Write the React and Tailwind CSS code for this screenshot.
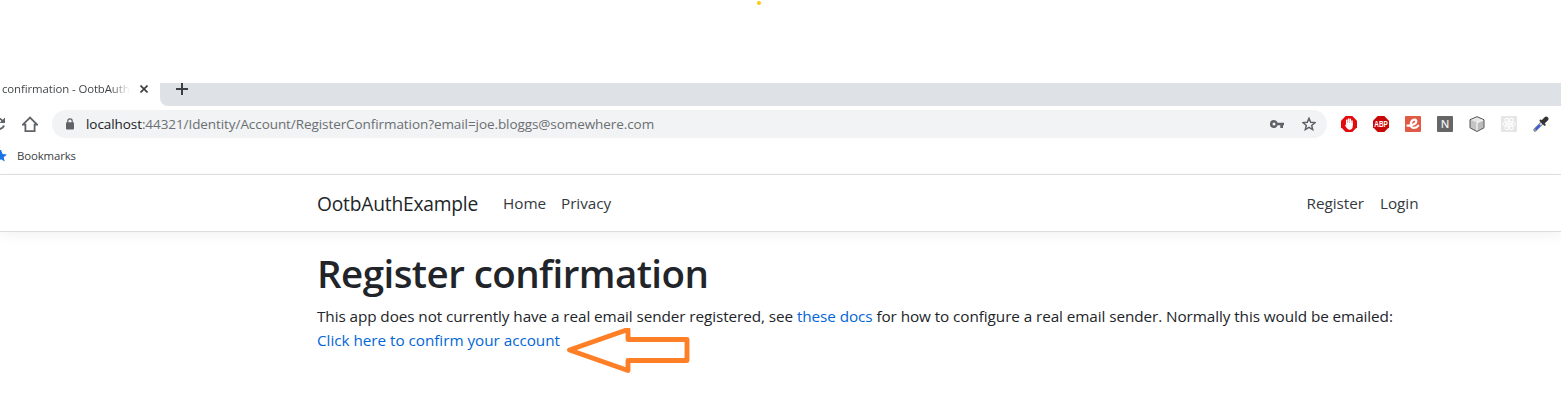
function Toolbar() {
  return (
    <div className="flex h-9 items-center">
      <svg className="h-4 w-2 shrink-0" viewBox="0 0 8 16" fill="none" stroke="#5f6368" strokeWidth="2">
        <path d="M-2 2.2A6 6 0 0 1 2.600 5.200M4 9.500A5.500 5.500 0 0 1 -1 13" />
        <path d="M5 1.500v5.500H-.5z" fill="#5f6368" stroke="none" />
      </svg>
      <svg className="ml-3.5 h-4 w-4 shrink-0" viewBox="0 0 16 16" fill="none" stroke="#5f6368" strokeWidth="1.8">
        <path d="M.9 8.600 8 1.500l7.100 7.100H12.600V15.100H3.400V8.600z" />
      </svg>
      <div className="ml-3.5 flex h-7 w-[1275px] shrink-0 items-center rounded-full bg-[#f1f3f4]">
        <svg className="ml-3.5 h-3 w-2 shrink-0" viewBox="0 0 8 12">
          <rect y="4.300" width="8" height="7.200" rx="1" fill="#5f6368" />
          <path d="M1.800 5V3a2.200 2.200 0 0 1 4.400 0v2" fill="none" stroke="#5f6368" strokeWidth="1.200" />
        </svg>
        <span className="ml-3 text-[13.5px] tracking-[-0.076px] whitespace-nowrap text-[#6b6f73]">
          <span className="text-[#202124]">localhost</span>:44321/Identity/Account/RegisterConfirmation?email=joe.bloggs@somewhere.com
        </span>
        <svg className="mr-[18px] ml-auto h-2 w-3.5 shrink-0" viewBox="0 0 14 8" fill="#5f6368">
          <path fillRule="evenodd" d="M4 0a4 4 0 0 1 3.700 2.700H14v2.600h-1V8h-2.700V5.300H7.700A4 4 0 1 1 4 0zm0 2.500a1.500 1.500 0 1 0 0 3 1.500 1.500 0 0 0 0-3z" />
        </svg>
        <svg className="mr-[11px] h-3.5 w-3.5 shrink-0" viewBox="0 0 14 14" fill="none" stroke="#5f6368" strokeWidth="1.500">
          <path d="m7 1.200 1.700 4 4.300.400-3.300 2.800 1 4.200L7 10.400l-3.700 2.200 1-4.200L1 5.600l4.300-.400z" />
        </svg>
      </div>
      <div className="ml-3.5 flex items-center gap-4">
        <svg className="size-4" viewBox="0 0 16 16">
          <path d="M4.700 0h6.600L16 4.700v6.600L11.300 16H4.700L0 11.300V4.700z" fill="#e40b0f" />
          <path d="M5.700 8V4.300M7.500 8V3M9.300 8V3.200M11 9V5" stroke="#fff" strokeWidth="1.500" strokeLinecap="round" />
          <path d="M5 7h6.700v3.500c0 2-1.200 3.200-3 3.200-2 0-3-1.400-4.700-4.400.2-.8 1-.6 1.500.1z" fill="#fff" />
        </svg>
        <svg className="size-4 overflow-visible" viewBox="0 0 16 16">
          <path d="M4.700 0h6.600L16 4.700v6.600L11.300 16H4.700L0 11.300V4.700z" fill="#c90707" />
          <text x="8" y="11" textAnchor="middle" textLength="13.400" lengthAdjust="spacingAndGlyphs" fontFamily="Liberation Sans, sans-serif" fontWeight="700" fontSize="8.300" fill="#fff">ABP</text>
        </svg>
        <svg className="size-4" viewBox="0 0 16 16">
          <rect width="16" height="16" rx="1" fill="#e05a45" />
          <path d="M2.400 9.600C6.500 9.800 11.300 8 11.300 5.200 11.300 2.400 5.800 3.200 5.800 8.500c0 4.500 4.700 4.200 7.400 1.200" fill="none" stroke="#fff" strokeWidth="2.200" strokeLinecap="round" />
        </svg>
        <div className="flex size-4 items-center justify-center rounded-[1px] bg-[#666] text-[11px] leading-4 font-semibold text-[#eee]">N</div>
        <svg className="size-4" viewBox="0 0 16 16" strokeLinejoin="round">
          <path d="m8 .7 7 3v8.100l-7 3.700-7-3.700V3.700z" fill="#c4c4c4" stroke="#555" />
          <path d="m8 1.500 6 2.500-6 2.500L2 4z" fill="#e6e6e6" />
          <path d="M8.500 7 14 4.500v6.800l-5.500 3z" fill="#bbb" />
          <path d="M8 14.500V6.700l6-2.500" fill="none" stroke="#fff" />
        </svg>
        <svg className="size-4" viewBox="0 0 16 16" fill="none" stroke="#fff">
          <rect width="16" height="16" rx="1" fill="#e6e6e6" stroke="none" />
          <ellipse cx="8" cy="8" rx="6.300" ry="2.500" />
          <ellipse cx="8" cy="8" rx="6.300" ry="2.500" transform="rotate(60 8 8)" />
          <ellipse cx="8" cy="8" rx="6.300" ry="2.500" transform="rotate(120 8 8)" />
          <circle cx="8" cy="8" r="1.200" fill="#fff" />
        </svg>
        <svg className="size-4" viewBox="0 0 16 16" strokeLinecap="round">
          <path d="m2 14 7-7" stroke="#777" strokeWidth="3.200" />
          <path d="m2.400 13.600 6.200-6.200" stroke="#d5dcf5" strokeWidth="1.800" />
          <path d="m3 13 3.500-3.500" stroke="#2f55e0" strokeWidth="1.900" />
          <path d="m7.500 4.500 4.200 4.200" stroke="#333" strokeWidth="2" />
          <path d="m10.500 5.500 2.700-2.700" stroke="#333" strokeWidth="4.500" />
        </svg>
      </div>
    </div>
  );
}

export default function App() {
  return (
    <div className="h-[412px] w-[1561px] overflow-hidden bg-white font-['Open_Sans','Noto_Sans',sans-serif] text-[#212529]">
      <div className="flex h-[83px] pl-[757px]">
        <div className="mt-px size-1 rounded-full bg-[#ffc90e]" />
      </div>
      <div className="flex h-[23px] bg-white">
        <div className="flex w-40 shrink-0 items-start pl-0.5">
          <span className="w-32 shrink-0 bg-linear-to-r from-[#3c4043] from-85% to-transparent bg-clip-text text-[11.4px] leading-3 tracking-[-0.1px] whitespace-nowrap text-transparent">confirmation - OotbAuth</span>
          <svg className="mt-0.5 ml-2.5 size-2" viewBox="0 0 8 8" stroke="#3c4043" strokeWidth="1.700"><path d="m.5.500 7 7m0-7-7 7" /></svg>
        </div>
        <div className="flex-1 rounded-bl-lg bg-[#dee1e6] pl-4">
          <svg className="h-3 w-3" viewBox="0 0 12 12" stroke="#3c4043" strokeWidth="2"><path d="M0 6h12M6 0v12" /></svg>
        </div>
      </div>
      <Toolbar />
      <div className="flex h-8 items-center pb-1 text-[11.4px] tracking-[-0.12px] text-[#3c4043]">
        <svg className="h-3 w-[7px]" viewBox="0 0 7 12" fill="#1a73e8"><path d="m1 0 1.600 4L7 4.400 3.700 7.300l1 4.300L1 9.300l-4 2.300V0z" /></svg>
        <span className="ml-2.5">Bookmarks</span>
      </div>
      <nav className="flex h-[58px] items-center border-y border-[#dadce0] pr-[142px] pl-[317px] text-[15.3px] tracking-[-0.05px] text-[#343a40] shadow-[0_4px_12px_rgba(0,0,0,0.05)]">
        <span className="w-[161px] pt-0.5 text-[19.2px] tracking-[-0.2px] whitespace-nowrap text-[#212529]">OotbAuthExample</span>
        <span className="ml-[25px] w-[43px] pt-px">Home</span>
        <span className="ml-[15px] pt-px">Privacy</span>
        <span className="ml-auto pt-px">Register</span>
        <span className="ml-4 w-[39px] pt-px">Login</span>
      </nav>
      <main className="pt-[17px] pl-[317px]">
        <h1 className="text-[38.5px] leading-12 font-semibold tracking-[-0.55px] whitespace-nowrap">Register confirmation</h1>
        <p className="mt-[7px] text-[15.3px] leading-6 tracking-[-0.084px] whitespace-nowrap">
          This app does not currently have a real email sender registered, see <a className="text-[#0366d6]">these docs</a> for how to configure a real email sender. Normally this would be emailed:
        </p>
        <div className="flex h-[51px] items-start">
          <a className="w-[243px] text-[15.3px] leading-6 tracking-[-0.045px] whitespace-nowrap text-[#0366d6]">Click here to confirm your account</a>
          <svg className="ml-1.5 h-[50px] w-[126px] shrink-0" viewBox="566 328 126 50" fill="none" stroke="#ff7f27" strokeWidth="4.900" strokeLinejoin="round">
            <path d="M569.500 350 628 329.500V339.500H687V360.500H628V370.500z" />
          </svg>
        </div>
      </main>
    </div>
  );
}
